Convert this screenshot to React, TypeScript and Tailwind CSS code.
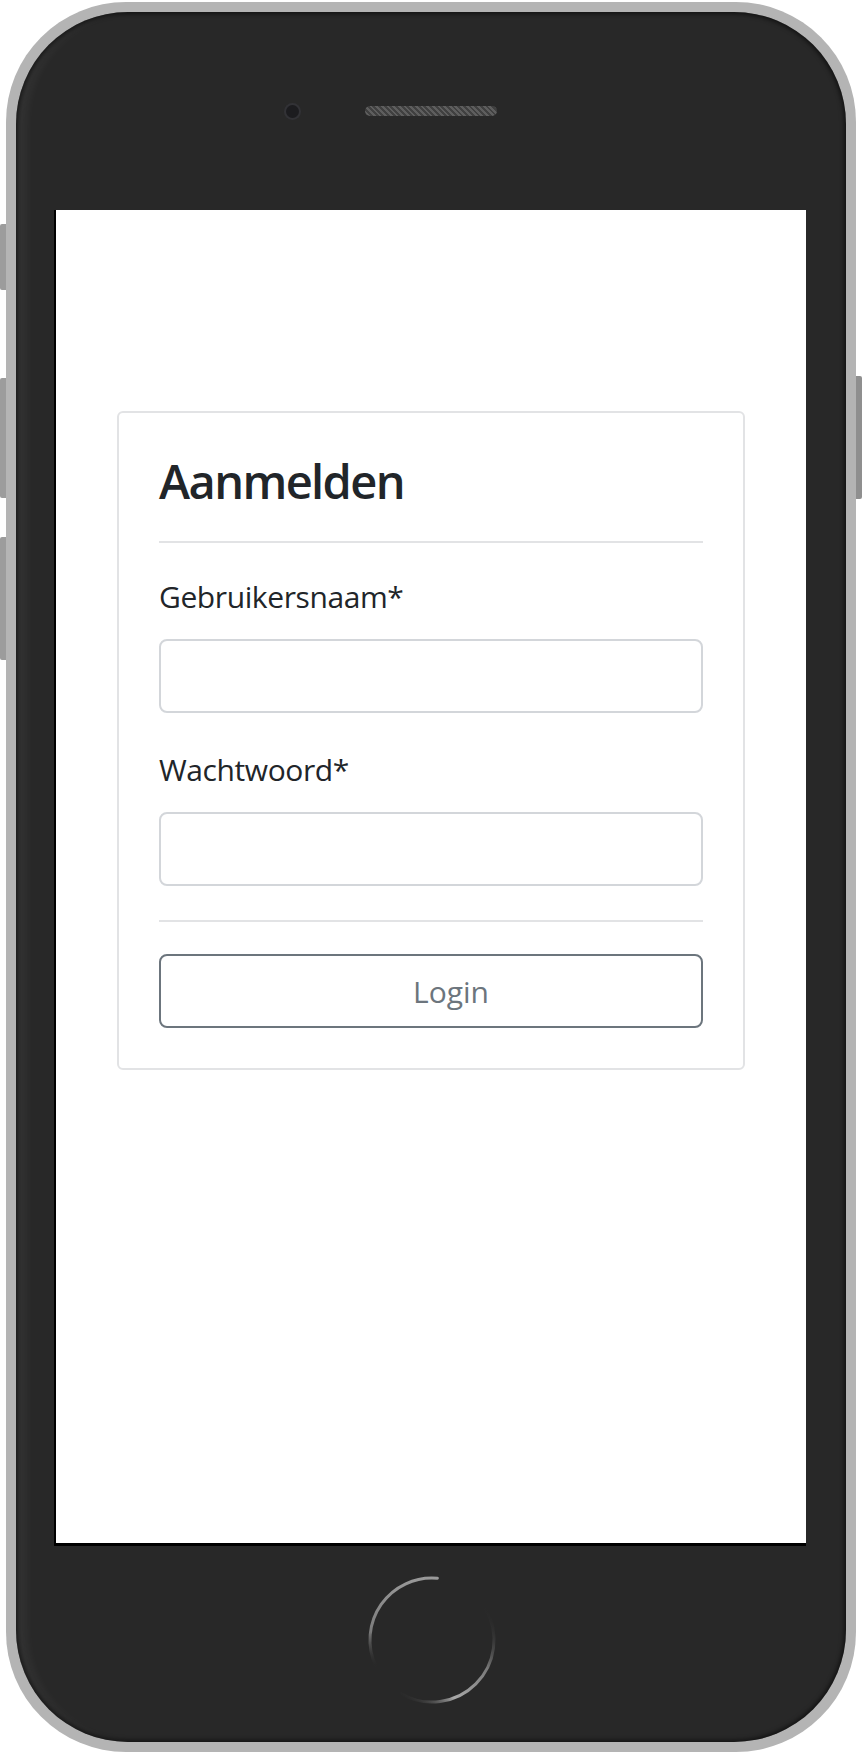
import React from 'react'

function HomeButton() {
  return (
    <svg width="132" height="132" viewBox="-2 -2 132 132" fill="none">
      <defs>
        <linearGradient id="hbLeft" x1="0" y1="0" x2="0" y2="92" gradientUnits="userSpaceOnUse">
          <stop offset="0" stopColor="#9a9a9a" />
          <stop offset="0.6" stopColor="#7c7c7c" />
          <stop offset="1" stopColor="#2a2a2a" stopOpacity="0" />
        </linearGradient>
        <linearGradient id="hbRight" x1="118" y1="30" x2="30" y2="120" gradientUnits="userSpaceOnUse">
          <stop offset="0" stopColor="#2a2a2a" stopOpacity="0" />
          <stop offset="0.35" stopColor="#7a7a7a" />
          <stop offset="0.7" stopColor="#a8a8a8" />
          <stop offset="1" stopColor="#2a2a2a" stopOpacity="0" />
        </linearGradient>
      </defs>
      <path d="M69.4 2.2 A62 62 0 0 0 7.8 90.2" stroke="url(#hbLeft)" strokeWidth="3" strokeLinecap="round" />
      <path d="M117.7 33 A62 62 0 0 1 33 117.7" stroke="url(#hbRight)" strokeWidth="3" strokeLinecap="round" />
    </svg>
  )
}

function Field({ label, type, top }: { label: string; type: string; top: string }) {
  return (
    <div className={top}>
      <label className="block h-[30px] text-[30px] leading-[30px] tracking-[-0.4px] text-[#212529]">{label}</label>
      <input
        type={type}
        className="mt-[27px] block h-[74px] w-full rounded-[8px] border-2 border-[#d3d6da] bg-white px-4 outline-none"
      />
    </div>
  )
}

export default function App() {
  return (
    <div className="flex w-[862px] h-[1754px] bg-white font-['Open_Sans','Noto_Sans',sans-serif]">
      {/* left side buttons */}
      <div className="flex w-[6px] flex-col pt-[224px]">
        <div className="h-[66px] w-[6px] rounded-l-[2px] bg-[#9c9c9c]" />
        <div className="mt-[88px] h-[120px] w-[6px] rounded-l-[2px] bg-[#9c9c9c]" />
        <div className="mt-[39px] h-[123px] w-[6px] rounded-l-[2px] bg-[#9c9c9c]" />
      </div>

      {/* phone body */}
      <div className="mt-[2px] h-[1750px] w-[850px] rounded-[120px] bg-[#b4b4b4] p-[10px]">
        <div className="flex h-full w-full flex-col items-center rounded-[112px] bg-[#282828] shadow-[inset_0_0_4px_2px_rgba(0,0,0,0.55),inset_14px_0_12px_-6px_rgba(255,255,255,0.07)]">
          {/* top bezel */}
          <div className="flex h-[198px] w-full items-start justify-center pt-[93px]">
            <div className="h-[13px] w-[13px] rounded-full bg-[#1c1c1f] shadow-[0_0_0_2px_#323236]" />
            <div className="ml-[66px] mt-[1px] h-[10px] w-[132px] rounded-full bg-[repeating-linear-gradient(45deg,#404040_0_2px,#5e5e5e_2px_4px)]" />
            <div className="ml-[66px] w-[13px]" />
          </div>

          {/* screen */}
          <div className="ml-[-2px] h-[1336px] w-[752px] border-b-[3px] border-l-2 border-black bg-white pt-[201px]">
            <div className="mx-auto w-[628px] rounded-[6px] border-2 border-[#e2e3e5] px-[40px] pb-[40px] pt-[44px]">
              <h2 className="h-[48px] text-[47px] font-semibold leading-[48px] tracking-[-1.6px] text-[#212529]">Aanmelden</h2>
              <div className="mt-[36px] h-[2px] bg-[#e2e3e5]" />
              <Field label="Gebruikersnaam*" type="text" top="mt-[39px]" />
              <Field label="Wachtwoord*" type="password" top="mt-[42px]" />
              <div className="mt-[34px] h-[2px] bg-[#e2e3e5]" />
              <button className="mt-[32px] flex h-[74px] w-full items-center justify-center rounded-[8px] border-2 border-[#6c757d] pl-[40px] text-[30px] text-[#6c757d]">
                Login
              </button>
            </div>
          </div>

          {/* bottom bezel */}
          <div className="flex flex-1 w-full justify-center pt-[28px] pl-[2px]">
            <HomeButton />
          </div>
        </div>
      </div>

      {/* right side button */}
      <div className="flex w-[6px] flex-col pt-[376px]">
        <div className="h-[123px] w-[6px] rounded-r-[2px] bg-[#8f8f8f]" />
      </div>
    </div>
  )
}
